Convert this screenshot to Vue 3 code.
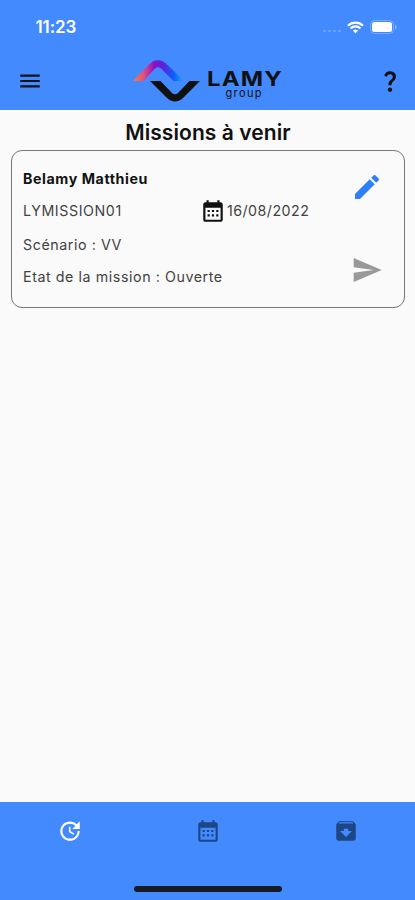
<template>
  <div class="screen">
    <header class="header">
      <div class="status-bar">
        <span class="time">11:23</span>
        <div class="status-icons">
          <span class="signal"><i v-for="n in 4" :key="n"></i></span>
          <svg class="wifi" viewBox="0 0 18 13">
            <path d="M1 4.6a11.3 11.3 0 0 1 16 0" />
            <path d="M3.8 7.5a7.3 7.3 0 0 1 10.4 0" />
            <path class="wifi-dot" d="M6.3 9.8a3.9 3.9 0 0 1 5.4 0L9 12.8z" />
          </svg>
          <svg class="battery" viewBox="0 0 27 14">
            <rect class="battery-case" x=".5" y=".5" width="23" height="13" rx="4" />
            <rect x="2" y="2" width="20" height="10" rx="2.5" />
            <path class="battery-cap" d="M25 4.5c2 .8 2 4.2 0 5z" />
          </svg>
        </div>
      </div>
      <div class="app-bar">
        <svg class="icon" viewBox="0 0 24 24"><path :d="icons.menu" /></svg>
        <svg class="logo" viewBox="0 0 156 46">
          <defs>
            <linearGradient id="wave" x1="0" y1="0" x2="1" y2="0">
              <stop offset="0" stop-color="#ff7a2a" />
              <stop offset=".2" stop-color="#e5527c" />
              <stop offset=".42" stop-color="#8a10c4" />
              <stop offset=".6" stop-color="#5a24dc" />
              <stop offset=".8" stop-color="#0c60fa" />
              <stop offset="1" stop-color="#2aa2fa" />
            </linearGradient>
          </defs>
          <path
            fill="url(#wave)"
            d="M1 23 17 6.500Q21 2.200 26 2.200T35 6.500L52 23H41.500L29 10.500Q26 7.800 23 10.500L11.500 23z"
          />
          <path
            class="ink"
            d="M18 23H28.500L40 35Q43 37.700 46 35L57.500 23H68L51.500 39.500Q47.500 43.500 43 43.500T34.500 39.500z"
          />
          <text class="brand" x="75" y="28" textLength="76" lengthAdjust="spacingAndGlyphs">LAMY</text>
          <text class="brand-sub" x="93.500" y="39" textLength="36">group</text>
        </svg>
        <svg class="icon" viewBox="0 0 24 24"><path :d="icons.help" /></svg>
      </div>
    </header>

    <main class="content">
      <h1 class="title">Missions à venir</h1>
      <article class="card">
        <div class="info">
          <div class="row"><span class="name">{{ mission.client }}</span></div>
          <div class="row reference">
            <span class="code">{{ mission.code }}</span>
            <svg class="icon" viewBox="0 0 24 24"><path :d="icons.calendar" /></svg>
            <span class="date">{{ mission.date }}</span>
          </div>
          <div class="row"><span class="scenario">Scénario : {{ mission.scenario }}</span></div>
          <div class="row"><span class="state">Etat de la mission : {{ mission.state }}</span></div>
        </div>
        <div class="actions">
          <svg class="edit" viewBox="0 0 24 24"><path :d="icons.edit" /></svg>
          <svg class="send" viewBox="0 0 24 24"><path :d="icons.send" /></svg>
        </div>
      </article>
    </main>

    <footer class="footer">
      <nav class="tabs">
        <div
          v-for="tab in tabs"
          :key="tab"
          class="tab"
          :class="{ active: tab === activeTab }"
          @click="activeTab = tab"
        >
          <svg class="icon" viewBox="0 0 24 24"><path :d="icons[tab]" /></svg>
        </div>
      </nav>
      <div class="home-indicator"></div>
    </footer>
  </div>
</template>

<script setup>
import { ref } from "vue";

const mission = {
  client: "Belamy Matthieu",
  code: "LYMISSION01",
  date: "16/08/2022",
  scenario: "VV",
  state: "Ouverte",
};

const tabs = ["update", "calendar", "archive"];
const activeTab = ref("update");

const icons = {
  menu: "M3 18h18v-2H3v2zm0-5h18v-2H3v2zm0-7v2h18V6H3z",
  help: "M11.07 12.85c.77-1.39 2.25-2.21 3.11-3.44.91-1.29.4-3.7-2.18-3.7-1.69 0-2.52 1.28-2.87 2.34L6.54 6.96C7.25 4.83 9.18 3 11.99 3c2.35 0 3.96 1.07 4.78 2.41.7 1.15 1.11 3.3.03 4.9-1.2 1.77-2.35 2.31-2.97 3.45-.25.46-.35.76-.35 2.24h-2.89c-.01-.78-.13-2.05.48-3.15zM14 20c0 1.1-.9 2-2 2s-2-.9-2-2 .9-2 2-2 2 .9 2 2z",
  calendar:
    "M19 4h-1V2h-2v2H8V2H6v2H5c-1.1 0-2 .9-2 2v14c0 1.1.9 2 2 2h14c1.1 0 2-.9 2-2V6c0-1.1-.9-2-2-2zm0 16H5V9h14v11zM7 11h2v2H7v-2zm4 0h2v2h-2v-2zm4 0h2v2h-2v-2zM7 15h2v2H7v-2zm4 0h2v2h-2v-2zm4 0h2v2h-2v-2z",
  edit: "M3 17.25V21h3.75L17.81 9.94l-3.75-3.75L3 17.25zM20.71 7.04c.39-.39.39-1.02 0-1.41l-2.34-2.34c-.39-.39-1.02-.39-1.41 0l-1.83 1.83 3.75 3.75 1.83-1.83z",
  send: "M2.01 21 23 12 2.01 3 2 10l15 2-15 2z",
  update:
    "M21 10.12h-6.78l2.74-2.82c-2.73-2.7-7.15-2.8-9.88-.1-2.73 2.71-2.73 7.08 0 9.79s7.15 2.71 9.88 0C18.32 15.65 19 14.08 19 12.1h2c0 1.98-.88 4.55-2.64 6.29-3.51 3.48-9.21 3.48-12.72 0-3.5-3.47-3.53-9.11-.02-12.58s9.14-3.47 12.65 0L21 3v7.12zM12.5 8v4.25l3.5 2.08-.72 1.21L11 13V8h1.5z",
  archive:
    "M20.54 5.23l-1.39-1.68C18.88 3.21 18.47 3 18 3H6c-.47 0-.88.21-1.16.55L3.46 5.23C3.17 5.57 3 6.02 3 6.5V19c0 1.1.9 2 2 2h14c1.1 0 2-.9 2-2V6.5c0-.48-.17-.93-.46-1.27zM12 17.5L6.5 12H10v-2h4v2h3.5L12 17.5zM5.12 5l.81-1h12l.94 1H5.12z",
};
</script>

<style>
body {
  margin: 0;
  background: #fafafa;
}
</style>

<style scoped>
.screen {
  display: flex;
  flex-direction: column;
  height: 900px;
  overflow: hidden;
  background: #fafafa;
  color: #111;
  font-family: Inter, "Liberation Sans", sans-serif;
}

.icon {
  flex: none;
  width: 26px;
  height: 26px;
  fill: currentColor;
}

.header {
  height: 109.5px;
  background: #448aff;
}

.status-bar {
  display: flex;
  justify-content: space-between;
  align-items: center;
  height: 54px;
  padding: 0 18px 0 35.5px;
  box-sizing: border-box;
  color: #fff;
}

.time {
  font-size: 17px;
  font-weight: 600;
  letter-spacing: -0.1px;
}

.status-icons {
  display: flex;
  align-items: center;
  gap: 6px;
}

.signal {
  display: flex;
  gap: 2px;
  padding-top: 8px;
}

.signal i {
  width: 3px;
  height: 2px;
  border-radius: 1px;
  background: rgba(255, 255, 255, 0.22);
}

.wifi {
  width: 17px;
  height: 13px;
  fill: none;
  stroke: #fff;
  stroke-width: 2.3;
}

.wifi .wifi-dot {
  fill: #fff;
  stroke: none;
}

.battery {
  width: 27px;
  height: 14px;
  fill: #fff;
}

.battery-case {
  fill: none;
  stroke: rgba(255, 255, 255, 0.28);
}

.battery-cap {
  fill: rgba(255, 255, 255, 0.4);
}

.app-bar {
  display: flex;
  justify-content: space-between;
  align-items: center;
  height: 53px;
  padding: 0 12px 0 17px;
}

.logo {
  width: 156px;
  height: 46px;
}

.ink,
.brand,
.brand-sub {
  fill: #111;
}

.brand {
  font: 700 20.5px Inter, sans-serif;
  letter-spacing: 1px;
}

.brand-sub {
  font: 400 11px Inter, sans-serif;
}

.content {
  flex: 1;
  padding: 9.5px 10px 0 11px;
}

.title {
  margin: 0;
  text-align: center;
  font-size: 21px;
  font-weight: 600;
  line-height: 28px;
  letter-spacing: 0.08px;
}

.card {
  display: flex;
  justify-content: space-between;
  height: 158px;
  margin-top: 3px;
  padding: 11px 21px 15px 11px;
  box-sizing: border-box;
  border: 1px solid #777;
  border-radius: 11px;
}

.info {
  display: grid;
  grid-template-rows: 32px 33px 34px 31px;
  color: #424242;
  font-size: 14.25px;
  letter-spacing: 0.57px;
}

.row {
  display: flex;
  align-items: center;
  white-space: nowrap;
}

.name {
  color: #111;
  font-weight: 700;
}

.code {
  width: 177px;
}

.reference .icon {
  color: #111;
}

.date {
  padding-left: 1px;
  letter-spacing: 0.45px;
}

.actions {
  display: flex;
  flex-direction: column;
  justify-content: space-between;
  padding: 9px 0 6px;
}

.actions svg {
  width: 32px;
  height: 32px;
}

.edit {
  fill: #2f80f8;
}

.send {
  fill: #999;
}

.footer {
  display: flex;
  flex-direction: column;
  align-items: center;
  justify-content: space-between;
  height: 98px;
  padding-bottom: 8px;
  box-sizing: border-box;
  background: #448aff;
}

.tabs {
  display: flex;
  width: 100%;
  height: 57px;
  padding-left: 1px;
  box-sizing: border-box;
}

.tab {
  display: flex;
  flex: 1;
  align-items: center;
  justify-content: center;
  color: #1d4685;
  cursor: pointer;
}

.tab.active {
  color: #fff;
}

.home-indicator {
  width: 148px;
  height: 6px;
  border-radius: 3px;
  background: #151a24;
}
</style>
